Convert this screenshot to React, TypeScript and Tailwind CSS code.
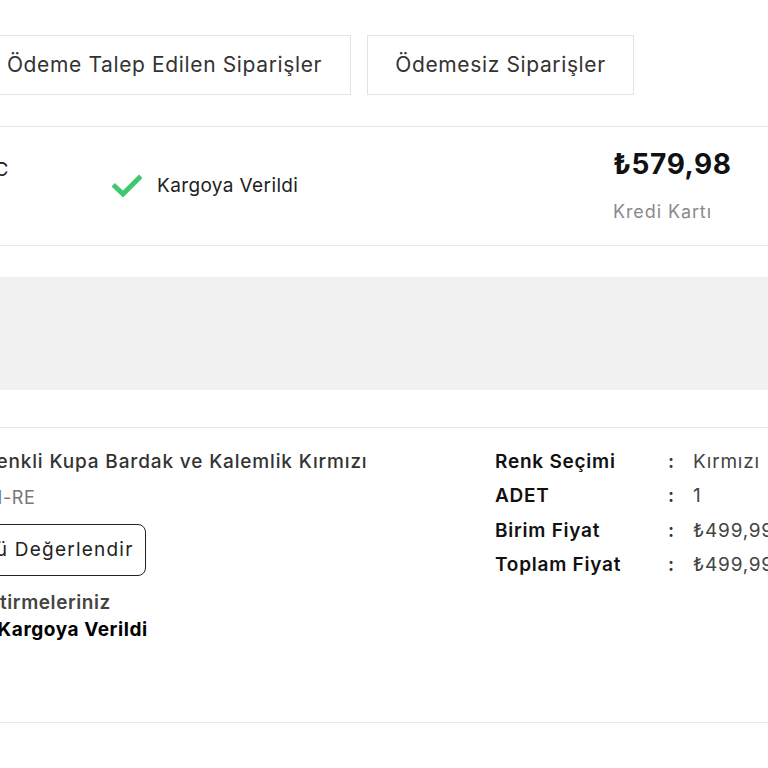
import React from "react";

function CheckIcon() {
	return (
		<svg width="30" height="24" viewBox="0 0 30 24" aria-hidden="true">
			<path
				d="M3 12.5 L11 20 L27 4"
				fill="none"
				stroke="#3fc96e"
				strokeWidth="5"
				strokeLinecap="square"
				strokeLinejoin="miter"
			/>
		</svg>
	);
}

const details = [
	{ label: "Renk Seçimi", value: "Kırmızı" },
	{ label: "ADET", value: "1" },
	{ label: "Birim Fiyat", value: "₺499,99" },
	{ label: "Toplam Fiyat", value: "₺499,99" },
];

export default function App() {
	return (
		<div className="w-[768px] h-[768px] overflow-hidden bg-white font-['Inter','Noto_Sans',sans-serif] text-[#222] tracking-[0.035em]">
			<div className="-ml-[55px] w-[1000px]">
				{/* tabs */}
				<div className="flex gap-4 pt-[35px] pl-[33px]">
					<button className="w-[373px] h-[60px] border border-[#e3e3e3] bg-white text-[21px] tracking-[0.03em] text-[#333] flex items-center justify-center whitespace-nowrap">
						Ödeme Talep Edilen Siparişler
					</button>
					<button className="w-[267px] h-[60px] border border-[#e3e3e3] bg-white text-[21px] tracking-[0.03em] text-[#333] flex items-center justify-center whitespace-nowrap">
						Ödemesiz Siparişler
					</button>
				</div>

				{/* order summary */}
				<div className="mt-[31px] h-[120px] border-y border-[#e6e6e6] flex">
					<div className="w-[167px] pt-[31px] pr-[103px] flex justify-end">
						<span className="text-[19px] leading-[24px] whitespace-nowrap">
							2024ABC
						</span>
					</div>
					<div className="w-[501px] flex items-center gap-[15px]">
						<CheckIcon />
						<span className="text-[19px] tracking-[0.02em] text-[#222]">
							Kargoya Verildi
						</span>
					</div>
					<div className="flex flex-col justify-center">
						<span className="text-[28px] leading-[32px] font-bold tracking-[0.02em] text-[#111]">
							₺579,98
						</span>
						<span className="mt-5 text-[18px] leading-[24px] tracking-[0.05em] text-[#8a8a8a]">
							Kredi Kartı
						</span>
					</div>
				</div>

				<div className="mt-[31px] h-[113px] bg-[#f1f1f1]" />

				{/* product */}
				<div className="mt-[37px] h-[296px] border-y border-[#e8e8e8] flex pt-[17px]">
					<div className="w-[550px] flex flex-col items-start text-[19px]">
						<span className="-ml-[6px] leading-[34px] font-medium tracking-[0.045em] text-[#333] whitespace-nowrap">
							Çok Renkli Kupa Bardak ve Kalemlik Kırmızı
						</span>
						<span className="mt-[7px] text-[18px] leading-[24px] text-[#777]">
							KBLMI-RE
						</span>
						<button className="mt-[14px] h-[52px] pl-[1px] pr-[11px] border border-[#222] rounded-lg text-[#222] tracking-[0.065em] flex items-center whitespace-nowrap">
							Ürünü Değerlendir
						</button>
						<span className="mt-[15px] leading-[24px] font-semibold text-[#444]">
							Değiştirmeleriniz
						</span>
						<span className="mt-[3px] leading-[24px] font-bold text-black">
							Ürün Kargoya Verildi
						</span>
					</div>
					<div className="grid grid-cols-[173px_25px_auto] auto-rows-[34.4px] items-center text-[19px] tracking-[0.04em]">
						{details.map((d) => (
							<React.Fragment key={d.label}>
								<span className="font-semibold text-[#111]">{d.label}</span>
								<span className="font-semibold text-[#333]">:</span>
								<span className="text-[#444] whitespace-nowrap">{d.value}</span>
							</React.Fragment>
						))}
					</div>
				</div>
			</div>
		</div>
	);
}
